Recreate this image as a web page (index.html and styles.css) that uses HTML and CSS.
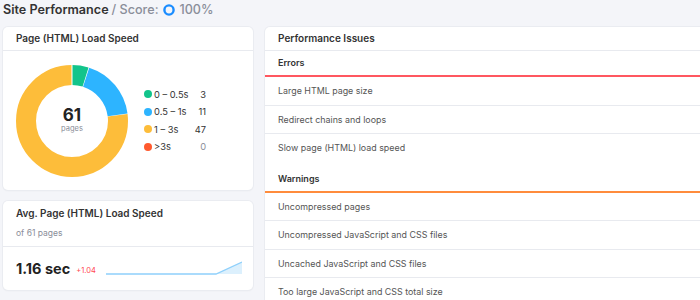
FILE: index.html
```html
<!DOCTYPE html>
<html lang="en">
<head>
    <meta charset="UTF-8">
    <title>Site Performance</title>
    <link rel="stylesheet" href="styles.css">
</head>
<body>
    <div class="page-title">
        <span class="title-main">Site Performance</span>
        <span class="title-sub">/ Score:</span>
        <svg class="score-ring" width="12" height="12" viewBox="0 0 12 12">
            <circle cx="6" cy="6" r="4.6" fill="none" stroke="#1a8cff" stroke-width="2.4"/>
        </svg>
        <span class="title-sub">100%</span>
    </div>

    <div class="layout">
        <div class="left-col">
            <div class="card">
                <div class="card-head">Page (HTML) Load Speed</div>
                <div class="speed-body">
                    <div class="donut">
                        <svg width="112" height="112" viewBox="0 0 112 112">
                            <g transform="rotate(-90 56 56)">
                                <!-- circumference 2*pi*46 = 289.03 -->
                                <circle cx="56" cy="56" r="46" fill="none" stroke="#fdbd3a" stroke-width="20"
                                    stroke-dasharray="222.2 289.03" stroke-dashoffset="-66.3"/>
                                <circle cx="56" cy="56" r="46" fill="none" stroke="#2db4ff" stroke-width="20"
                                    stroke-dasharray="51.6 289.03" stroke-dashoffset="-14.4"/>
                                <circle cx="56" cy="56" r="46" fill="none" stroke="#12c48b" stroke-width="20"
                                    stroke-dasharray="13.8 289.03" stroke-dashoffset="0"/>
                            </g>
                            <line x1="56" y1="0" x2="56" y2="22" stroke="#fff" stroke-width="1"/>
                        </svg>
                        <div class="donut-label">
                            <div class="donut-num">61</div>
                            <div class="donut-unit">pages</div>
                        </div>
                    </div>
                    <ul class="legend">
                        <li><span class="dot green"></span><span class="leg-name">0 – 0.5s</span><span class="leg-val">3</span></li>
                        <li><span class="dot blue"></span><span class="leg-name">0.5 – 1s</span><span class="leg-val">11</span></li>
                        <li><span class="dot yellow"></span><span class="leg-name">1 – 3s</span><span class="leg-val">47</span></li>
                        <li><span class="dot red"></span><span class="leg-name">&gt;3s</span><span class="leg-val muted">0</span></li>
                    </ul>
                </div>
            </div>

            <div class="card">
                <div class="avg-head">
                    <div class="avg-title">Avg. Page (HTML) Load Speed</div>
                    <div class="avg-sub">of 61 pages</div>
                </div>
                <div class="avg-body">
                    <span class="avg-value">1.16 sec</span>
                    <span class="avg-delta">+1.04</span>
                    <svg class="spark" width="136" height="18" viewBox="0 0 136 18">
                        <path d="M110 15 L136 3 L136 15 Z" fill="#dcf0fd"/>
                        <path d="M0 15 L110 15 L136 3" fill="none" stroke="#8fd0fb" stroke-width="1.3"/>
                    </svg>
                </div>
            </div>

            <div class="card stub"></div>
        </div>

        <div class="card issues">
            <div class="card-head">Performance Issues</div>
            <div class="section-head errors">Errors</div>
            <div class="issue">Large HTML page size</div>
            <div class="issue">Redirect chains and loops</div>
            <div class="issue last">Slow page (HTML) load speed</div>
            <div class="section-head warnings">Warnings</div>
            <div class="issue">Uncompressed pages</div>
            <div class="issue">Uncompressed JavaScript and CSS files</div>
            <div class="issue">Uncached JavaScript and CSS files</div>
            <div class="issue">Too large JavaScript and CSS total size</div>
        </div>
    </div>
</body>
</html>
```

FILE: styles.css
```css
body {
    margin: 0;
    padding: 0 0 0 3px;
    background: #f4f5f9;
    font-family: Inter, "Noto Sans", sans-serif;
    color: #333;
    overflow: hidden;
    height: 300px;
}

.page-title {
    display: flex;
    align-items: center;
    gap: 3px;
    height: 19px;
    font-size: 12.6px;
    font-weight: 600;
}

.title-main {
    color: #333;
}

.title-sub {
    color: #8a8e99;
    font-weight: 500;
}

.score-ring {
    margin: 0 1px 0 2px;
}

.layout {
    display: grid;
    grid-template-columns: 250px 460px;
    gap: 12px;
    margin-top: 8px;
}

.left-col {
    display: flex;
    flex-direction: column;
    gap: 11px;
}

.card {
    background: #fff;
    border-radius: 5px;
    box-shadow: 0 0 0 1px #eaecf1, 0 1px 2px rgba(0, 0, 0, 0.05);
}

.card-head {
    height: 23px;
    line-height: 23px;
    padding: 0 13px;
    font-size: 10px;
    font-weight: 600;
    color: #333;
    border-bottom: 1px solid #e8eaef;
}

.speed-body {
    height: 139px;
    display: flex;
    align-items: center;
    padding-left: 13px;
}

.donut {
    position: relative;
    width: 112px;
    height: 112px;
}

.donut svg {
    display: block;
}

.donut-label {
    position: absolute;
    inset: 0;
    display: flex;
    flex-direction: column;
    align-items: center;
    justify-content: center;
}

.donut-num {
    font-size: 17px;
    font-weight: 700;
    color: #222;
    line-height: 18px;
    margin-top: -2px;
}

.donut-unit {
    font-size: 7.5px;
    color: #8a8e99;
    line-height: 10px;
}

.legend {
    list-style: none;
    margin: 0 0 0 16px;
    padding: 0;
    width: 62px;
}

.legend li {
    display: flex;
    align-items: center;
    height: 17.5px;
    font-size: 9.3px;
    color: #333;
}

.dot {
    width: 8px;
    height: 8px;
    border-radius: 50%;
    margin-right: 2px;
}

.dot.green { background: #12c48b; }
.dot.blue { background: #2db4ff; }
.dot.yellow { background: #fdbd3a; }
.dot.red { background: #ff5a2e; }

.leg-name {
    flex: 1;
}

.leg-val {
    text-align: right;
}

.leg-val.muted {
    color: #8a8e99;
}

.avg-head {
    height: 41px;
    padding: 4px 13px 0;
    border-bottom: 1px solid #e8eaef;
}

.avg-title {
    font-size: 10px;
    font-weight: 600;
    line-height: 16px;
}

.avg-sub {
    font-size: 8.5px;
    color: #8a8e99;
    line-height: 12px;
    margin-top: 6px;
}

.avg-body {
    height: 43px;
    display: flex;
    align-items: center;
    padding: 0 11px 0 13px;
}

.avg-value {
    font-size: 14.5px;
    font-weight: 700;
    color: #222;
    white-space: nowrap;
}

.avg-delta {
    font-size: 7.5px;
    color: #ff4953;
    margin: 4px 0 0 6px;
    white-space: nowrap;
}

.spark {
    margin: 0 0 0 auto;
    position: relative;
    top: -1px;
}

.stub {
    height: 20px;
}

.issues {
    align-self: start;
    height: 300px;
}

.section-head {
    height: 24px;
    line-height: 24px;
    padding: 0 13px;
    font-size: 9px;
    font-weight: 600;
    color: #333;
}

.section-head.errors {
    border-bottom: 2px solid #ff5760;
}

.section-head.warnings {
    margin-top: 5px;
    border-bottom: 2px solid #ff8c3c;
}

.issue {
    height: 27.5px;
    line-height: 27.5px;
    padding: 0 13px;
    font-size: 8.9px;
    color: #555;
    border-bottom: 1px solid #e8eaef;
}

.issue.last {
    border-bottom: none;
}
```
